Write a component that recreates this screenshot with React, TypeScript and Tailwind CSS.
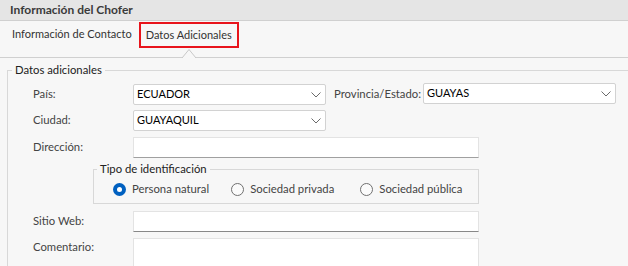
import React from "react"

const font = { fontFamily: 'Lato, "Segoe UI", sans-serif' }

const Chevron = () => (
  <svg width="10" height="6" viewBox="0 0 10 6" className="shrink-0">
    <path d="M0.5 0.5 L5 5 L9.5 0.5" fill="none" stroke="#6b6b6b" strokeWidth="1" />
  </svg>
)

const Select = ({ value }: { value: string }) => (
  <div className="flex items-center justify-between w-[193px] h-[21px] bg-white border border-[#d2d2d2] rounded-[2px] pl-[3px] pr-[4px] text-[11px] text-black">
    <span>{value}</span>
    <Chevron />
  </div>
)

const Label = ({ children }: { children: React.ReactNode }) => (
  <div className="w-[100px] shrink-0 text-[11.3px] text-[#444]">{children}</div>
)

const Radio = ({ label, checked }: { label: string; checked?: boolean }) => (
  <div className="flex items-center gap-[6px] whitespace-nowrap">
    {checked ? (
      <div className="w-[13px] h-[13px] rounded-full bg-[#0060c0] flex items-center justify-center">
        <div className="w-[5px] h-[5px] rounded-full bg-white" />
      </div>
    ) : (
      <div className="w-[13px] h-[13px] rounded-full border border-[#707070] bg-[#fbfbfb]" />
    )}
    <span className="text-[11.3px] text-[#444]">{label}</span>
  </div>
)

export default function App() {
  return (
    <div className="w-[628px] h-[266px] overflow-hidden bg-[#f7f7f7]" style={font}>
      <div className="h-[21px] bg-[#e5e5e5] border-b border-[#d0d0d0] flex items-center pl-[10px]">
        <span className="text-[12px] font-bold text-[#3a3a3a]">Información del Chofer</span>
      </div>
      <div className="relative h-[37px] border-b border-[#d0d0d0] flex items-start pt-[1px] pl-[8px]">
        <div className="h-[25px] flex items-center px-[4px] text-[11px] text-[#333] whitespace-nowrap">Información de Contacto</div>
        <div className="h-[26px] ml-[3px] flex items-center px-[5px] border-2 border-[#e8141c] text-[11px] text-[#333] whitespace-nowrap">
          Datos Adicionales
        </div>
        <svg className="absolute left-[182px] top-[27px]" width="15" height="10" viewBox="0 0 15 10">
          <path d="M0 10 L7 1.5 L14 10" fill="#f7f7f7" stroke="#c8c8c8" strokeWidth="1" />
        </svg>
      </div>
      <fieldset className="mt-[4px] ml-[7px] w-[640px] border border-[#d8d8d8]">
        <legend className="ml-[4px] px-[3px] text-[11.3px] text-[#222] leading-[16px]">Datos adicionales</legend>
        <div className="flex flex-col pl-[25px] pt-[6px]">
          <div className="flex items-center h-[21px]">
            <Label>País:</Label>
            <Select value="ECUADOR" />
            <span className="ml-[8px] w-[89px] text-[11.3px] text-[#444] whitespace-nowrap">Provincia/Estado:</span>
            <div className="-mt-[2px]">
              <Select value="GUAYAS" />
            </div>
          </div>
          <div className="flex items-center h-[21px] mt-[5px]">
            <Label>Ciudad:</Label>
            <Select value="GUAYAQUIL" />
          </div>
          <div className="flex items-center h-[21px] mt-[6px]">
            <Label>Dirección:</Label>
            <div className="w-[346px] h-[21px] bg-white border border-[#e3e3e3] border-b-[#a0a0a0]" />
          </div>
          <fieldset className="mt-[3px] ml-[60px] w-[386px] h-[43px] border border-[#d8d8d8]">
            <legend className="ml-[3px] px-[3px] text-[11.3px] text-[#222] leading-[16px]">Tipo de identificación</legend>
            <div className="flex items-center h-[24px] pl-[19px]">
              <Radio label="Persona natural" checked />
              <div className="ml-[22px]">
                <Radio label="Sociedad privada" />
              </div>
              <div className="ml-[26px]">
                <Radio label="Sociedad pública" />
              </div>
            </div>
          </fieldset>
          <div className="flex items-center h-[21px] mt-[7px]">
            <Label>Sitio Web:</Label>
            <div className="w-[346px] h-[21px] bg-white border border-[#e3e3e3] border-b-[#888888]" />
          </div>
          <div className="flex items-start mt-[6px]">
            <div className="pt-[1px]">
              <Label>Comentario:</Label>
            </div>
            <div className="w-[346px] h-[40px] bg-white border border-[#e3e3e3]" />
          </div>
        </div>
      </fieldset>
    </div>
  )
}
